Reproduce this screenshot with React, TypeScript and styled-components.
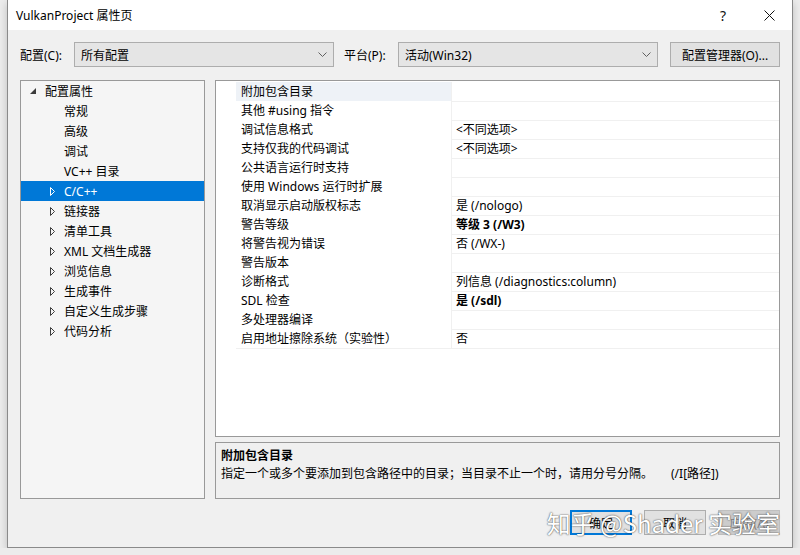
import styled, { createGlobalStyle, css } from 'styled-components';

const GlobalStyle = createGlobalStyle`
  html, body {
    margin: 0;
    background: #ececec;
  }
  body {
    font-family: "Noto Sans", "Noto Sans CJK SC", sans-serif;
    font-size: 12px;
    color: #000;
  }
`

const Window = styled.div`
  position: relative;
  margin-left: 7px;
  width: 786px;
  box-sizing: border-box;
  border: 1px solid #8a8a8a;
  border-top: none;
  background: #f0f0f0;
  box-shadow: 0 3px 8px rgba(0, 0, 0, 0.2);
`
const TitleBar = styled.div`
  display: flex;
  align-items: center;
  height: 30px;
  background: #fff;
`
const TitleText = styled.div`
  flex: 1;
  padding-left: 8px;
  font-size: 12px;
`
const CaptionButton = styled.div`
  width: 46px;
  height: 30px;
  display: flex;
  align-items: center;
  justify-content: center;
  font-size: 14px;
  color: #111;
`
const Body = styled.div`
  display: flex;
  flex-direction: column;
  padding: 12px;
`
const Toolbar = styled.div`
  display: flex;
  align-items: center;
  height: 25px;
`
const FieldLabel = styled.span<{ $gap?: number }>`
  width: 54px;
  flex: none;
  margin-left: ${p => p.$gap || 0}px;
`
const Select = styled.div`
  width: 260px;
  height: 25px;
  box-sizing: border-box;
  display: flex;
  align-items: center;
  justify-content: space-between;
  padding: 0 6px 0 6px;
  border: 1px solid #adadad;
  background: #e5e5e5;
`
const ToolButton = styled.div`
  margin-left: 12px;
  width: 110px;
  height: 25px;
  box-sizing: border-box;
  display: flex;
  align-items: center;
  justify-content: center;
  border: 1px solid #adadad;
  background: #e1e1e1;
`
const Main = styled.div`
  display: flex;
  gap: 10px;
  margin-top: 13px;
  height: 419px;
`
const TreePanel = styled.div`
  width: 185px;
  flex: none;
  box-sizing: border-box;
  border: 1px solid #999;
  background: #f5f5f5;
`
const TreeRow = styled.div<{ $level: number; $selected?: boolean }>`
  display: flex;
  align-items: center;
  height: 20px;
  padding-left: ${p => p.$level * 19 + 7}px;
  ${p => p.$selected && css`
    background: #0078d7;
    color: #fff;
  `}
`
const Expander = styled.span`
  width: 10px;
  height: 20px;
  margin-right: 7px;
  display: flex;
  align-items: center;
  justify-content: center;
`
const RightColumn = styled.div`
  flex: 1;
  display: flex;
  flex-direction: column;
  gap: 5px;
`
const Grid = styled.div`
  flex: 1;
  box-sizing: border-box;
  padding-top: 1px;
  border: 1px solid #999;
  background: #fff;
`
const GridRow = styled.div`
  display: grid;
  grid-template-columns: 20px 216px 1fr;
  height: 19px;
`
const Gutter = styled.div``
const NameCell = styled.div<{ $active?: boolean }>`
  box-sizing: border-box;
  padding: 1px 0 0 5px;
  line-height: 18px;
  border-bottom: 1px solid #f0f0f0;
  border-right: 1px solid #f0f0f0;
  background: ${p => (p.$active ? '#eef2f7' : '#fff')};
  white-space: nowrap;
`
const ValueCell = styled.div<{ $bold?: boolean }>`
  box-sizing: border-box;
  padding: 1px 0 0 4px;
  line-height: 18px;
  border-bottom: 1px solid #f0f0f0;
  font-weight: ${p => (p.$bold ? 700 : 400)};
  white-space: nowrap;
`
const DescPanel = styled.div`
  height: 57px;
  box-sizing: border-box;
  border: 1px solid #999;
  padding: 4px 5px;
  background: #f0f0f0;
`
const DescTitle = styled.div`
  font-weight: 700;
  line-height: 18px;
`
const DescText = styled.div`
  line-height: 18px;
  white-space: nowrap;
`
const Switch = styled.span`
  margin-left: 18px;
`
const Footer = styled.div`
  position: relative;
  display: flex;
  justify-content: flex-end;
  gap: 12px;
  margin-top: 11px;
`
const DialogButton = styled.div<{ $primary?: boolean; $disabled?: boolean }>`
  width: 62px;
  height: 25px;
  box-sizing: border-box;
  display: flex;
  align-items: center;
  justify-content: center;
  border: 1px solid #adadad;
  background: #e1e1e1;
  ${p => p.$primary && css`
    border: 2px solid #0078d7;
  `}
  ${p => p.$disabled && css`
    border-color: #bfbfbf;
    background: #cccccc;
    color: #838383;
  `}
`
const Watermark = styled.div`
  position: absolute;
  right: 0;
  top: -3px;
  font-family: "Noto Sans CJK SC", sans-serif;
  font-size: 24px;
  line-height: 32px;
  color: #fff;
  white-space: nowrap;
  text-shadow: 0 0 1px #555, 0 0 2px rgba(0, 0, 0, 0.55);
  pointer-events: none;
`

const Chevron = () => (
  <svg width="9" height="5" viewBox="0 0 9 5">
    <polyline points="0.5,0.5 4.5,4.5 8.5,0.5" fill="none" stroke="#606060" strokeWidth="1" />
  </svg>
)

const ExpandedArrow = () => (
  <svg width="6" height="6" viewBox="0 0 6 6">
    <polygon points="6,0 6,6 0,6" fill="#3c3c3c" />
  </svg>
)

const CollapsedArrow = ({ color }: { color: string }) => (
  <svg width="5" height="9" viewBox="0 0 5 9">
    <path d="M0.5 0.5 L4.5 4.5 L0.5 8.5 Z" fill="none" stroke={color} strokeWidth="1" />
  </svg>
)

const CloseIcon = () => (
  <svg width="11" height="11" viewBox="0 0 11 11">
    <path d="M0.5 0.5 L10.5 10.5 M10.5 0.5 L0.5 10.5" stroke="#111" strokeWidth="1" />
  </svg>
)

const treeItems = [
  { label: '常规', arrow: false },
  { label: '高级', arrow: false },
  { label: '调试', arrow: false },
  { label: 'VC++ 目录', arrow: false },
  { label: 'C/C++', arrow: true, selected: true },
  { label: '链接器', arrow: true },
  { label: '清单工具', arrow: true },
  { label: 'XML 文档生成器', arrow: true },
  { label: '浏览信息', arrow: true },
  { label: '生成事件', arrow: true },
  { label: '自定义生成步骤', arrow: true },
  { label: '代码分析', arrow: true },
]

const properties = [
  { name: '附加包含目录', value: '' },
  { name: '其他 #using 指令', value: '' },
  { name: '调试信息格式', value: '<不同选项>' },
  { name: '支持仅我的代码调试', value: '<不同选项>' },
  { name: '公共语言运行时支持', value: '' },
  { name: '使用 Windows 运行时扩展', value: '' },
  { name: '取消显示启动版权标志', value: '是 (/nologo)' },
  { name: '警告等级', value: '等级 3 (/W3)', bold: true },
  { name: '将警告视为错误', value: '否 (/WX-)' },
  { name: '警告版本', value: '' },
  { name: '诊断格式', value: '列信息 (/diagnostics:column)' },
  { name: 'SDL 检查', value: '是 (/sdl)', bold: true },
  { name: '多处理器编译', value: '' },
  { name: '启用地址擦除系统（实验性）', value: '否' },
]

export default function App() {
  return (
    <>
      <GlobalStyle />
      <Window>
        <TitleBar>
          <TitleText>VulkanProject 属性页</TitleText>
          <CaptionButton>?</CaptionButton>
          <CaptionButton><CloseIcon /></CaptionButton>
        </TitleBar>
        <Body>
          <Toolbar>
            <FieldLabel>配置(C):</FieldLabel>
            <Select>所有配置<Chevron /></Select>
            <FieldLabel $gap={10}>平台(P):</FieldLabel>
            <Select>活动(Win32)<Chevron /></Select>
            <ToolButton>配置管理器(O)...</ToolButton>
          </Toolbar>
          <Main>
            <TreePanel>
              <TreeRow $level={0}>
                <Expander><ExpandedArrow /></Expander>
                配置属性
              </TreeRow>
              {treeItems.map(item => (
                <TreeRow key={item.label} $level={1} $selected={item.selected}>
                  <Expander>
                    {item.arrow && <CollapsedArrow color={item.selected ? '#fff' : '#3c3c3c'} />}
                  </Expander>
                  {item.label}
                </TreeRow>
              ))}
            </TreePanel>
            <RightColumn>
              <Grid>
                {properties.map((p, i) => (
                  <GridRow key={p.name}>
                    <Gutter />
                    <NameCell $active={i === 0}>{p.name}</NameCell>
                    <ValueCell $bold={p.bold}>{p.value}</ValueCell>
                  </GridRow>
                ))}
              </Grid>
              <DescPanel>
                <DescTitle>附加包含目录</DescTitle>
                <DescText>
                  指定一个或多个要添加到包含路径中的目录；当目录不止一个时，请用分号分隔。
                  <Switch>(/I[路径])</Switch>
                </DescText>
              </DescPanel>
            </RightColumn>
          </Main>
          <Footer>
            <DialogButton $primary>确定</DialogButton>
            <DialogButton>取消</DialogButton>
            <DialogButton $disabled>应用(A)</DialogButton>
            <Watermark>知乎 @Shader 实验室</Watermark>
          </Footer>
        </Body>
      </Window>
    </>
  )
}
